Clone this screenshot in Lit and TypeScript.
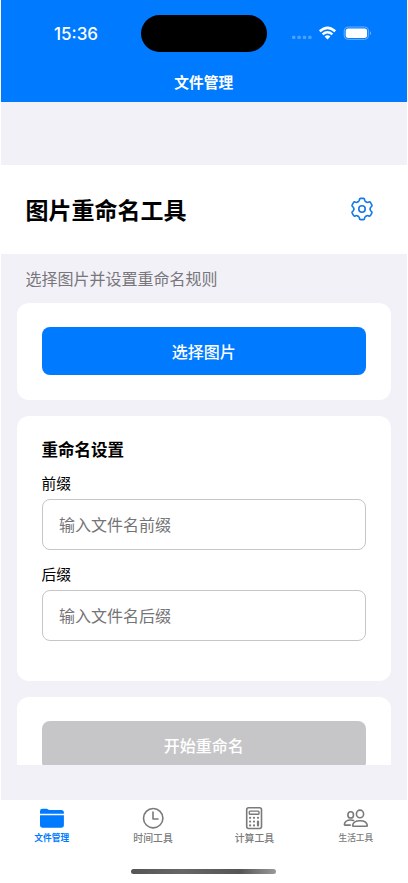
import { LitElement, html, svg, css } from "lit";
import { customElement, property } from "lit/decorators.js";

@customElement("tab-icon")
export class TabIcon extends LitElement {
  @property() name = "";

  static styles = css`
    :host { display: block; width: 30px; height: 26px; }
    svg { display: block; width: 30px; height: 26px; fill: none; stroke: currentColor; stroke-width: 1.6; stroke-linecap: round; stroke-linejoin: round; }
    .solid { fill: currentColor; stroke: none; }
  `;

  render() {
    switch (this.name) {
      case "folder":
        return html`<svg viewBox="0 0 30 26">
          <path class="solid" d="M3 8.8V6.2Q3 3.8 5.4 3.8H9.2Q10.4 3.8 11.2 4.5Q11.9 5.1 12.8 5.1H24.3Q26.9 5.1 26.9 7.7V8.8Z" />
          <path class="solid" d="M3 10.2H26.9V20Q26.9 22.7 24.2 22.7H5.7Q3 22.7 3 20Z" />
        </svg>`;
      case "clock":
        return html`<svg viewBox="0 0 30 26">
          <circle cx="15.2" cy="13.2" r="9.7" />
          <path d="M15 7V14H20" />
        </svg>`;
      case "calculator":
        return html`<svg viewBox="0 0 30 26">
          <rect x="7.7" y="2.8" width="14.8" height="20.7" rx="2" />
          <rect x="10.3" y="6.1" width="9.7" height="3.2" rx="0.8" stroke-width="1.4" />
          <g class="solid">
            <circle cx="11.1" cy="12.8" r="1.1" /><circle cx="15" cy="12.8" r="1.1" /><circle cx="19" cy="12.8" r="1.1" />
            <circle cx="11.1" cy="16.6" r="1.1" /><circle cx="15" cy="16.6" r="1.1" />
            <circle cx="11.1" cy="20.4" r="1.1" /><circle cx="15" cy="20.4" r="1.1" />
            <rect x="17.9" y="15.5" width="2.2" height="6" rx="1.1" />
          </g>
        </svg>`;
      default:
        return html`<svg viewBox="0 0 30 26">
          <ellipse cx="9.7" cy="9.9" rx="2.8" ry="3.1" />
          <ellipse cx="19" cy="8.9" rx="3.6" ry="3.8" />
          <path d="M11.6 20.6C12 17.6 15.2 15.8 19 15.8C22.8 15.8 25.9 17.6 26.3 20.3Q26.4 21.3 25.2 21.3H12.6Q11.6 21.3 11.6 20.6Z" />
          <path d="M9.3 20.1H4.3Q3.3 20.1 3.4 19.1C3.9 16.5 6.5 15 9.8 15Q11.3 15 12.6 15.6" />
        </svg>`;
    }
  }
}

@customElement("settings-card")
export class SettingsCard extends LitElement {
  static styles = css`
    :host { display: block; box-sizing: border-box; background: #fff; border-radius: 12px; padding: 24px 24.5px; }
  `;
  render() {
    return html`<slot></slot>`;
  }
}

@customElement("app-root")
export class AppRoot extends LitElement {
  static styles = css`
    :host { display: block; width: 408px; height: 883px; overflow: hidden; background: #fff; font-family: Inter, "Noto Sans CJK SC", sans-serif; color: #000; }
    * { box-sizing: border-box; }
    .screen { width: 405.5px; height: 883px; margin-left: 1px; display: flex; flex-direction: column; background: #f2f1f7; }
    header { height: 102px; flex: none; background: #007aff; color: #fff; }
    .status { height: 66px; display: grid; grid-template-columns: 140px 126px 1fr; align-items: center; }
    .time { padding-left: 10px; padding-top: 1px; text-align: center; font-size: 17px; font-weight: 550; line-height: 20px; }
    .island { height: 37px; border-radius: 19px; background: #000; }
    .signals { display: block; width: 84px; height: 18px; margin-left: 22px; }
    .nav { font-size: 14.7px; font-weight: 700; text-align: center; line-height: 20px; padding-top: 7px; }
    .spacer { height: 62.5px; flex: none; }
    .hero { height: 89.5px; flex: none; background: #fff; display: flex; align-items: center; justify-content: space-between; padding: 0 32.5px 0 24.5px; }
    h1 { margin: 0; padding-top: 3px; font-size: 23px; font-weight: 700; line-height: 34px; }
    .gear { width: 24px; height: 24px; fill: none; stroke: #1479e6; stroke-width: 1.6; stroke-linecap: round; stroke-linejoin: round; }
    .scroll { height: 510.5px; flex: none; overflow: hidden; padding: 0 16px; }
    .hint { height: 49px; line-height: 50px; padding-left: 8.5px; font-size: 16px; color: #77767b; }
    settings-card { margin-bottom: 16px; }
    .pick { height: 96.5px; padding-top: 23.5px; }
    .form { height: 265.5px; }
    .run { height: 97px; }
    .button { height: 48.5px; border-radius: 8px; background: #007aff; color: #fff; font-size: 16px; font-weight: 500; line-height: 50px; text-align: center; }
    .off { background: #c6c6c8; line-height: 51px; }
    h2 { margin: 0; font-size: 16.5px; font-weight: 700; line-height: 20px; }
    label { display: block; font-size: 14.7px; line-height: 22px; margin: 13.5px 0 4px; }
    .field { height: 50.5px; border: 1px solid #c6c6c8; border-radius: 8px; padding-left: 16.5px; font-size: 16px; line-height: 51px; color: #747476; }
    .field + label { margin-top: 14.5px; margin-bottom: 4px; }
    .tabs { margin-top: auto; height: 83.5px; background: #fff; display: grid; grid-template-columns: repeat(4, 1fr); grid-template-rows: 69px auto; color: #7a7a7b; }
    .tab { display: flex; flex-direction: column; align-items: center; padding-top: 5.5px; font-size: 9.9px; font-weight: 500; line-height: 14px; }
    .tab.small { font-size: 8.7px; }
    .tab.active { color: #007aff; font-weight: 700; }
    .home { grid-column: 1 / -1; justify-self: center; width: 145px; height: 5px; margin-top: 0.5px; border-radius: 3px; background: linear-gradient(90deg, #555, #666 35%, #555 75%, #999); }
  `;

  private tabs = [
    { icon: "folder", label: "文件管理", cls: "tab small active" },
    { icon: "clock", label: "时间工具", cls: "tab" },
    { icon: "calculator", label: "计算工具", cls: "tab" },
    { icon: "people", label: "生活工具", cls: "tab small" },
  ];

  render() {
    return html`<div class="screen">
      <header>
        <div class="status">
          <div class="time">15:36</div>
          <div class="island"></div>
          <svg class="signals" viewBox="0 0 84 18">
            <g fill="#4ba3ff">
              <rect x="3" y="11.8" width="3.4" height="3.2" rx="1" /><rect x="8.4" y="11.8" width="3.4" height="3.2" rx="1" />
              <rect x="13.8" y="11.8" width="3.4" height="3.2" rx="1" /><rect x="19.2" y="11.8" width="3.4" height="3.2" rx="1" />
            </g>
            <g fill="none" stroke="#fff" stroke-width="2.5">
              <path d="M30.8 7.3Q38.5 .4 46.2 7.3" /><path d="M33.6 10.4Q38.5 6.2 43.4 10.4" />
            </g>
            <path fill="#fff" d="M35.6 12.4Q38.5 10.2 41.4 12.4L38.5 15.4Z" />
            <rect x="55.2" y="3" width="24.4" height="12.4" rx="4" fill="none" stroke="#66b0ff" />
            <rect x="56.7" y="4.5" width="21.4" height="9.4" rx="2.6" fill="#fff" />
            <path d="M81 7.2Q83.4 9.2 81 11.2Z" fill="#66b0ff" />
          </svg>
        </div>
        <div class="nav">文件管理</div>
      </header>
      <div class="spacer"></div>
      <div class="hero">
        <h1>图片重命名工具</h1>
        <svg class="gear" viewBox="0 0 24 24">
          ${[0, 60, 120, 180, 240, 300].map(
            (a) => svg`<path transform="rotate(${a} 12 12)" d="M7.9 4.9Q9.2 4.15 9.3 3.4L9.4 2.6Q9.5 1.4 10.7 1.4H13.3Q14.5 1.4 14.6 2.6L14.7 3.4Q14.8 4.15 16.1 4.9" />`
          )}
          <circle cx="12" cy="12" r="3.2" />
        </svg>
      </div>
      <main class="scroll">
        <div class="hint">选择图片并设置重命名规则</div>
        <settings-card class="pick"><div class="button">选择图片</div></settings-card>
        <settings-card class="form">
          <h2>重命名设置</h2>
          <label>前缀</label>
          <div class="field">输入文件名前缀</div>
          <label>后缀</label>
          <div class="field">输入文件名后缀</div>
        </settings-card>
        <settings-card class="run"><div class="button off">开始重命名</div></settings-card>
      </main>
      <nav class="tabs">
        ${this.tabs.map((t) => html`<div class=${t.cls}><tab-icon name=${t.icon}></tab-icon><span>${t.label}</span></div>`)}
        <div class="home"></div>
      </nav>
    </div>`;
  }
}
